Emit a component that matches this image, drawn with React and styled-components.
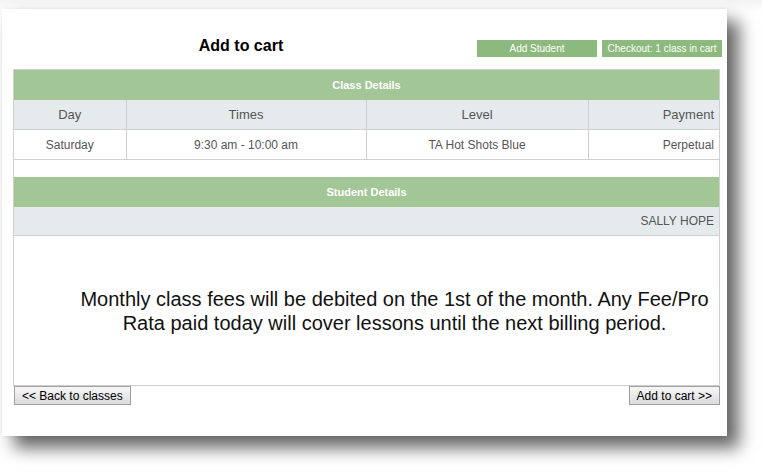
import React from 'react';
import styled, { createGlobalStyle } from 'styled-components';

const GlobalStyle = createGlobalStyle`
	body {
		margin: 0;
		background: #fff;
		font-family: "Liberation Sans", Arial, sans-serif;
	}
`;

const Page = styled.div`
	padding: 9px 0 0 2px;
	height: 472px;
	box-sizing: border-box;
	background: linear-gradient(#f3f3f3, #fff 12px);
`;

const Card = styled.div`
	width: 725px;
	height: 427px;
	box-sizing: border-box;
	background: #fff;
	padding: 31px 7px 0 11px;
	box-shadow: 12px 12px 16px rgba(0, 0, 0, 0.6), 0 0 4px rgba(0, 0, 0, 0.08);
`;

const TopBar = styled.div`
	display: flex;
	align-items: center;
	height: 17px;
	margin: 0 -2px 12px 0;
`;

const Title = styled.h1`
	flex: 1;
	margin: 0 8px 6px 0;
	text-align: center;
	font-size: 16px;
	font-weight: bold;
	color: #000;
`;

const GreenButton = styled.button`
	width: 120px;
	height: 17px;
	margin-left: ${(p) => (p.$first ? '0' : '5px')};
	border: none;
	background: #8cb97d;
	color: #fff;
	font-family: "Liberation Sans", Arial, sans-serif;
	font-size: 10px;
	padding: 0;
`;

const Box = styled.div`
	border: 1px solid #cfcfcf;
	height: 317px;
	box-sizing: border-box;
	display: flex;
	flex-direction: column;
`;

const Table = styled.table`
	width: 100%;
	border-collapse: collapse;
	table-layout: fixed;
	margin-bottom: ${(p) => p.$gap || 0}px;
`;

const SectionHead = styled.th`
	height: 30px;
	background: #a3c696;
	color: #fff;
	font-size: 11px;
	font-weight: bold;
	text-align: center;
	padding: 0;
`;

const HeadCell = styled.td`
	height: 29px;
	background: #e5ebed;
	color: #555;
	font-size: 13px;
	text-align: ${(p) => p.$align || 'center'};
	padding: 0 5px;
	border-left: ${(p) => (p.$first ? 'none' : '1px solid #cfcfcf')};
	border-bottom: 1px solid #cfcfcf;
`;

const Cell = styled.td`
	height: 29px;
	color: #555;
	font-size: 12px;
	text-align: ${(p) => p.$align || 'center'};
	padding: 0 5px;
	border-left: ${(p) => (p.$first ? 'none' : '1px solid #cfcfcf')};
	border-bottom: 1px solid #cfcfcf;
`;

const NameCell = styled.td`
	height: 28px;
	background: #e5ebed;
	color: #555;
	font-size: 12px;
	text-align: right;
	padding: 0 5px;
	border-bottom: 1px solid #cfcfcf;
`;

const Message = styled.div`
	flex: 1;
	display: flex;
	align-items: center;
	justify-content: center;
	padding: 0 4px 0 60px;
	font-size: 20px;
	line-height: 24px;
	color: #111;
	text-align: center;
`;

const Footer = styled.div`
	display: flex;
	justify-content: space-between;
	padding-left: 1px;
`;

const NavButton = styled.button`
	height: 19px;
	padding: 0 7px;
	border: 1px solid #a0a0a0;
	background: linear-gradient(#f7f7f7, #dcdcdc);
	color: #000;
	font-family: "Liberation Sans", Arial, sans-serif;
	font-size: 12px;
`;

export default function App() {
	return (
		<>
			<GlobalStyle />
			<Page>
				<Card>
					<TopBar>
						<Title>Add to cart</Title>
						<GreenButton $first>Add Student</GreenButton>
						<GreenButton>Checkout: 1 class in cart</GreenButton>
					</TopBar>
					<Box>
						<Table $gap={17}>
							<colgroup>
								<col style={{ width: 112 }} />
								<col style={{ width: 240 }} />
								<col style={{ width: 222 }} />
								<col />
							</colgroup>
							<thead>
								<tr>
									<SectionHead colSpan={4}>Class Details</SectionHead>
								</tr>
							</thead>
							<tbody>
								<tr>
									<HeadCell $first>Day</HeadCell>
									<HeadCell>Times</HeadCell>
									<HeadCell>Level</HeadCell>
									<HeadCell $align="right">Payment</HeadCell>
								</tr>
								<tr>
									<Cell $first>Saturday</Cell>
									<Cell>9:30 am - 10:00 am</Cell>
									<Cell>TA Hot Shots Blue</Cell>
									<Cell $align="right">Perpetual</Cell>
								</tr>
							</tbody>
						</Table>
						<Table>
							<thead>
								<tr>
									<SectionHead>Student Details</SectionHead>
								</tr>
							</thead>
							<tbody>
								<tr>
									<NameCell>SALLY HOPE</NameCell>
								</tr>
							</tbody>
						</Table>
						<Message>
							Monthly class fees will be debited on the 1st of the month. Any Fee/Pro Rata paid today will cover lessons until the next billing period.
						</Message>
					</Box>
					<Footer>
						<NavButton>&lt;&lt; Back to classes</NavButton>
						<NavButton>Add to cart &gt;&gt;</NavButton>
					</Footer>
				</Card>
			</Page>
		</>
	);
}
